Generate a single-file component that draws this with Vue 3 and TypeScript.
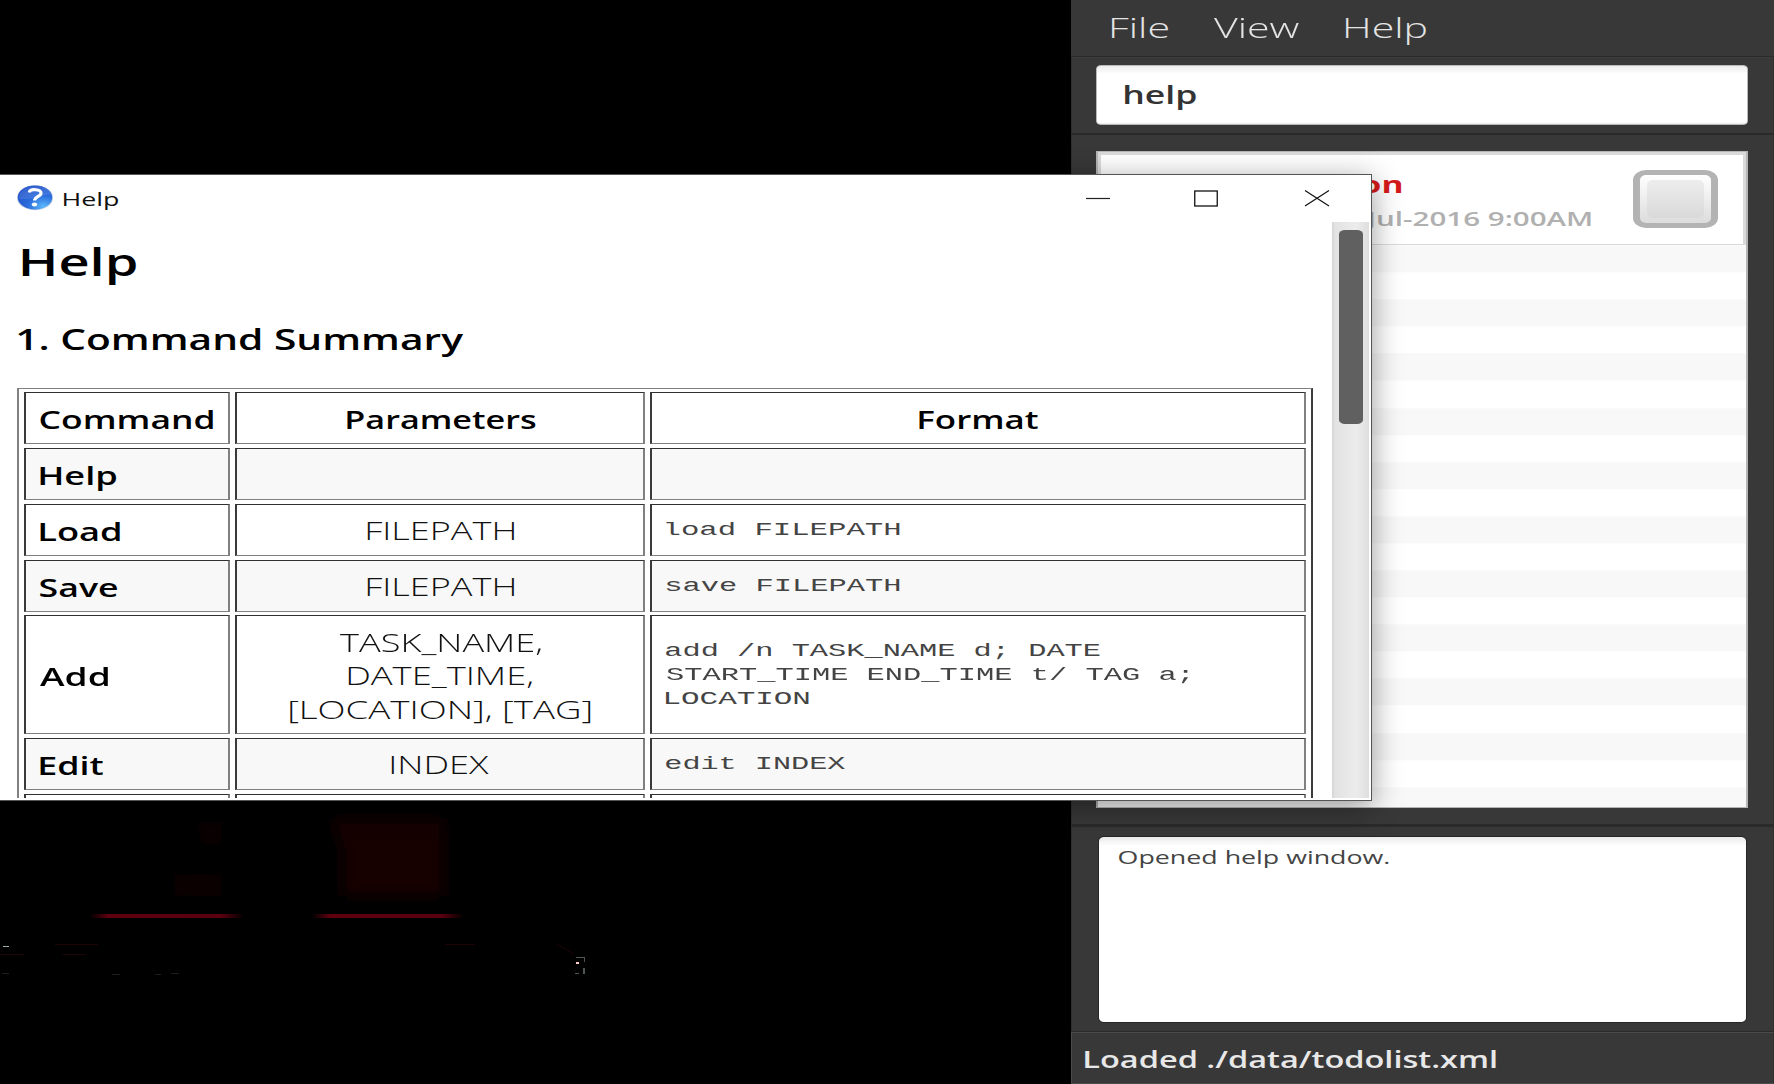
<script setup lang="ts">
import type { Directive } from 'vue'

interface Piece { text: string; width: number }
interface Row {
  name: Piece
  params: Piece[]
  format: string[]
  height: number
  shaded: boolean
}

const MONO_ADVANCE = 18.13

// Stretches a line of text so its glyphs span exactly the given width.
const vFit: Directive<HTMLElement, number> = {
  mounted(el, { value }) {
    const ctx = document.createElement('canvas').getContext('2d')
    if (!ctx) return
    const style = getComputedStyle(el)
    ctx.font = `${style.fontWeight} ${style.fontSize} ${style.fontFamily}`
    const m = ctx.measureText((el.textContent ?? '').trim())
    const left = -m.actualBoundingBoxLeft
    const k = value / (m.actualBoundingBoxRight + m.actualBoundingBoxLeft)
    el.style.width = `${value}px`
    el.style.transform = `translateX(${-left * k}px) scaleX(${k})`
  },
}

const menus: Piece[] = [
  { text: 'File', width: 57 },
  { text: 'View', width: 85 },
  { text: 'Help', width: 82 },
]

const headings: Piece[] = [
  { text: 'Command', width: 173 },
  { text: 'Parameters', width: 189 },
  { text: 'Format', width: 119.5 },
]

const rows: Row[] = [
  { name: { text: 'Help', width: 76.5 }, params: [], format: [], height: 52, shaded: true },
  { name: { text: 'Load', width: 80 }, params: [{ text: 'FILEPATH', width: 147 }], format: ['load FILEPATH'], height: 52, shaded: false },
  { name: { text: 'Save', width: 77.5 }, params: [{ text: 'FILEPATH', width: 147 }], format: ['save FILEPATH'], height: 52, shaded: true },
  {
    name: { text: 'Add', width: 68 },
    params: [
      { text: 'TASK_NAME,', width: 201 },
      { text: 'DATE_TIME,', width: 184 },
      { text: '[LOCATION], [TAG]', width: 300 },
    ],
    format: ['add /n TASK_NAME d; DATE', 'START_TIME END_TIME t/ TAG a;', 'LOCATION'],
    height: 119,
    shaded: false,
  },
  { name: { text: 'Edit', width: 63.5 }, params: [{ text: 'INDEX', width: 98 }], format: ['edit INDEX'], height: 52, shaded: true },
]

const monoWidth = (line: string): number => line.length * MONO_ADVANCE - (line.endsWith(';') ? 3 : 1)
</script>

<template>
  <div class="desktop">
    <svg class="wallpaper" width="1071" height="284" viewBox="0 800 1071 284">
      <defs>
        <filter id="soft" x="-20%" y="-20%" width="140%" height="140%"><feGaussianBlur stdDeviation="7" /></filter>
        <linearGradient id="glow" x1="0" x2="1" y1="0" y2="0">
          <stop offset="0" stop-color="#60000f" stop-opacity="0" />
          <stop offset=".12" stop-color="#60000f" />
          <stop offset=".85" stop-color="#5a0010" />
          <stop offset="1" stop-color="#60000f" stop-opacity="0" />
        </linearGradient>
      </defs>
      <g filter="url(#soft)" fill="#150000">
        <path d="M330 818H444V896H342V850Z" />
        <path d="M196 822h26v22h-20zM174 874h48v22h-48z" opacity=".5" />
      </g>
      <rect x="90" y="914" width="154" height="4" fill="url(#glow)" />
      <rect x="312" y="914" width="152" height="4" fill="url(#glow)" />
      <g fill="#9aa">
        <rect x="3" y="946" width="6" height="1" />
        <rect x="576" y="962" width="3" height="2" fill="#fcc" />
        <path d="M576 957h9v5h-1v-4h-8zM583 968h2v6h-2zM575 973h4v1h-4z" opacity=".5" />
        <path d="M0 954h14v1H0zM112 974h8v1h-8zM155 974h6v1h-6zM171 973h8v1h-8zM2 973h7v1H2z" opacity=".18" />
      </g>
      <path d="M0 954.500H24M55 944.500H98M62 954.500H86M445 944.500H475M556 944L574 954" stroke="#1c0505" />
    </svg>

    <main class="app">
      <nav class="menubar">
        <span v-for="m in menus" :key="m.text" v-fit="m.width" class="fit menu">{{ m.text }}</span>
      </nav>
      <section class="search">
        <div class="field"><span v-fit="71.5" class="fit query">help</span></div>
      </section>
      <section class="tasks">
        <div class="list">
          <article class="card">
            <div class="info">
              <span v-fit="39" class="fit task">on</span>
              <span v-fit="227" class="fit date">Jul-2016 9:00AM</span>
            </div>
            <div class="check"><div class="mark"></div></div>
          </article>
        </div>
      </section>
      <section class="result">
        <div class="message"><span v-fit="270" class="fit">Opened help window.</span></div>
      </section>
      <footer class="status"><span v-fit="411" class="fit">Loaded ./data/todolist.xml</span></footer>
    </main>

    <section class="window">
      <header class="titlebar">
        <svg class="badge" width="37" height="26" viewBox="0 0 37 26">
          <defs>
            <radialGradient id="orb" cx=".75" cy=".88" r=".85">
              <stop offset="0" stop-color="#5cb8fb" />
              <stop offset=".55" stop-color="#2a6cdc" />
              <stop offset="1" stop-color="#2456cc" />
            </radialGradient>
          </defs>
          <ellipse cx="18" cy="12.700" rx="18" ry="12.500" fill="#c3cde2" />
          <ellipse cx="18" cy="12.500" rx="17.200" ry="11.900" fill="url(#orb)" />
          <path d="M2 12C4 -2 33 -2 35 10C26 8 20 15 2 14Z" fill="#fff" opacity=".1" />
          <path d="M12.300 7.500C13 3.600 24 3.800 24 8.200C24 11.500 17.800 11.500 17.600 15.500" fill="none" stroke="#fff" stroke-width="3.200" />
          <ellipse cx="17.500" cy="19.500" rx="2.700" ry="1.900" fill="#fff" />
        </svg>
        <span v-fit="56" class="fit caption">Help</span>
        <svg class="controls" width="244" height="18" viewBox="0 0 244 18" fill="none" stroke="#111">
          <path d="M0 8.500H24" stroke="#222" stroke-width="1.200" />
          <rect x="108.750" y="1" width="22.500" height="15" stroke-width="1.300" />
          <path d="M219 .5L243 16M243 .5L219 16" stroke-width="1.200" />
        </svg>
      </header>
      <div class="body">
        <div class="page">
          <h1 v-fit="114" class="fit">Help</h1>
          <h2 v-fit="446" class="fit">1. Command Summary</h2>
          <div class="table">
            <div class="row heading">
              <div v-for="h in headings" :key="h.text" class="cell">
                <span v-fit="h.width" class="fit strong">{{ h.text }}</span>
              </div>
            </div>
            <div v-for="r in rows" :key="r.name.text" class="row" :class="{ shaded: r.shaded }" :style="{ height: r.height + 'px' }">
              <div class="cell"><span v-fit="r.name.width" class="fit strong">{{ r.name.text }}</span></div>
              <div class="cell center">
                <span v-for="p in r.params" :key="p.text" v-fit="p.width" class="fit light">{{ p.text }}</span>
              </div>
              <div class="cell code">
                <code v-for="line in r.format" :key="line" v-fit="monoWidth(line)" class="fit">{{ line }}</code>
              </div>
            </div>
            <div class="row last"><div class="cell"></div><div class="cell"></div><div class="cell"></div></div>
          </div>
        </div>
        <div class="scrollbar"><div class="thumb"></div></div>
      </div>
    </section>
  </div>
</template>

<style>
body { margin: 0; background: #000; }
</style>

<style scoped>
.desktop {
  position: relative;
  width: 1774px;
  height: 1084px;
  overflow: hidden;
  background: #000;
  font-family: "Open Sans", "Noto Sans", sans-serif;
}
.desktop * { box-sizing: border-box; }
.wallpaper { position: absolute; left: 0; top: 800px; }
.fit { display: block; flex: none; white-space: pre; transform-origin: 0 50%; }

.app { display: flex; flex-direction: column; width: 703px; height: 1084px; margin-left: 1071px; background: #383838; }
.menubar {
  display: flex;
  gap: 46px;
  height: 57px;
  padding: 8px 0 0 39.500px;
  border-bottom: 1px solid #2a2a2a;
}
.menu { font-size: 28px; line-height: 38px; font-weight: 300; color: #e4e4e4; }
.search, .tasks, .result { border: 1px solid #303030; border-top-color: #3c3c3c; border-bottom-color: #2a2a2a; }
.search { height: 77px; padding: 7px 25px 0 24px; }
.field {
  height: 60px;
  padding: 8px 0 0 28px;
  background: linear-gradient(#ececec, #fff 8px, #fff 56px, #eee);
  border: 1px solid #b9b9b9;
  border-radius: 5px / 4px;
}
.query { font-size: 25px; line-height: 40px; font-weight: 600; color: #333; }
.tasks { height: 691px; padding: 16px 25px 0 24px; border-top: 1px solid #2a2a2a; }
.list {
  height: 657px;
  border: 1px solid #b5b5b5;
  border-width: 1px 2px;
  background: repeating-linear-gradient(#fff 0 27.080px, #f8f8f8 27.080px 54.160px) 0 66.300px;
}
.card {
  display: flex;
  justify-content: space-between;
  height: 93px;
  padding: 12px 25px 0 261px;
  background: #fff;
  border: solid #dadada;
  border-width: 3px 3px 1px 3px;
}
.info { display: flex; flex-direction: column; }
.task { font-size: 24px; line-height: 34px; font-weight: 700; color: #d61a1a; }
.date { margin: 3.500px 0 0 2px; font-size: 19px; line-height: 28px; font-weight: 600; color: #b0b0b0; }
.check {
  width: 85px;
  height: 58px;
  margin-top: 3px;
  padding: 5px 7px;
  border: solid #b3b3b3;
  border-width: 5px 7px;
  border-radius: 13px / 10px;
  background: linear-gradient(#fff, #dcdcdc);
}
.mark { height: 38px; border-radius: 6px / 5px; background: linear-gradient(#ededed, #d9d9d9); }
.result { height: 207px; padding: 9px 26px 0; border-top: 2px solid #2a2a2a; }
.message {
  height: 187px;
  padding: 7px 0 0 20px;
  border: 1px solid #262626;
  border-radius: 6px / 5px;
  background: linear-gradient(#ebebeb, #fff 9px);
  font-size: 19px;
  line-height: 26px;
  color: #444;
}
.status {
  flex: 1;
  padding: 9px 0 0 13px;
  border: 1px solid #4b4b4b;
  border-right-color: #303030;
  font-size: 23.500px;
  line-height: 34px;
  font-weight: 600;
  color: #e8e8e8;
}

.window {
  position: absolute;
  left: -2px;
  top: 174px;
  display: flex;
  flex-direction: column;
  width: 1374px;
  height: 627px;
  border: 1px solid #555;
  background: #fff;
  box-shadow: 0 6px 28px rgba(0, 0, 0, .4);
}
.titlebar { display: flex; height: 47px; padding-left: 18px; }
.badge { margin-top: 10px; }
.caption { margin: 11px 0 0 8.500px; font-size: 18.500px; line-height: 26px; color: #111; }
.controls { margin: 14.500px 0 0 967.500px; }
.body { display: flex; flex: 1; min-height: 0; padding: 0 2px 2px 0; }
.page { width: 1333px; padding-left: 18px; overflow: hidden; }
h1 { margin: 12px 0 0 4.500px; font-size: 38px; line-height: 54px; font-weight: 600; color: #000; }
h2 { margin: 31px 0 0 1px; font-size: 28.500px; line-height: 40px; font-weight: 600; color: #000; }
.table {
  display: flex;
  flex-direction: column;
  gap: 3.720px;
  width: 1296px;
  height: 640px;
  margin-top: 29px;
  padding: 3.400px 5px 0;
  border: 1px solid #808080;
  border-left-width: 2px;
  border-right: 2px solid #3c3c3c;
}
.row { display: grid; grid-template-columns: 206px 410px 656px; column-gap: 5px; flex: none; }
.heading, .last { height: 52px; }
.cell {
  display: flex;
  flex-direction: column;
  align-items: flex-start;
  justify-content: center;
  padding: 2px 0 0 14px;
  border: solid #808080;
  border-width: 1px 2px 1px 2px;
  border-top-color: #303030;
  border-left-color: #3a3a3a;
}
.shaded .cell { background: #f8f8f8; }
.heading .cell + .cell, .center { align-items: center; padding-left: 0; }
.heading .cell + .cell { padding-left: 2px; }
.strong { font-size: 25.500px; line-height: 34px; font-weight: 600; color: #000; }
.light { font-size: 25.500px; line-height: 33.500px; font-weight: 300; color: #111; }
.code { padding-top: 0; }
code { font: 17.500px/24px "Liberation Mono", monospace; color: #444; }
.scrollbar {
  width: 37px;
  padding: 8px 6px 0 7px;
  background: linear-gradient(90deg, #d4d4d4, #e2e2e2 8%, #ececec 65%, #dedede);
}
.thumb { height: 194px; border-radius: 6px / 4px; background: #606060; }
</style>
